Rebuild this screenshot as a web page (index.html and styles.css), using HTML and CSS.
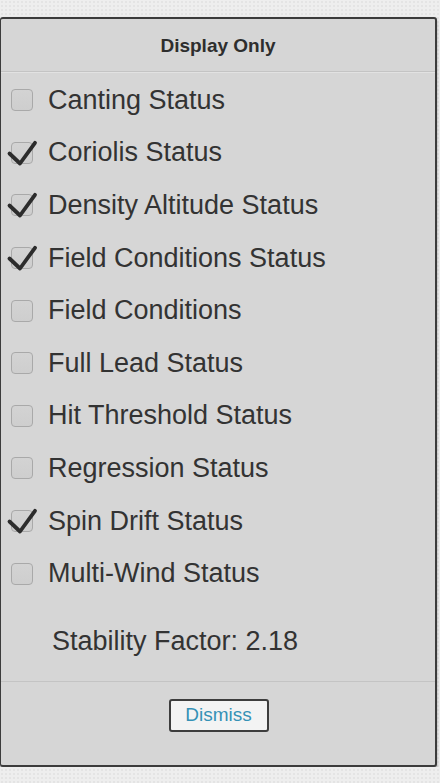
FILE: index.html
```html
<!DOCTYPE html>
<html lang="en">
<head>
    <meta charset="UTF-8">
    <meta name="viewport" content="width=device-width, initial-scale=1.0">
    <title>Display Only</title>
    <link rel="stylesheet" href="styles.css">
</head>
<body>

    <div class="panel">
        <div class="panel-header">Display Only</div>

        <div class="status-list">
            <label class="row"><span class="box"></span>Canting Status</label>
            <label class="row"><span class="box checked"><svg viewBox="0 0 30 26"><path d="M1.5 12.5 L12 22.5 L27 1.8"/></svg></span>Coriolis Status</label>
            <label class="row"><span class="box checked"><svg viewBox="0 0 30 26"><path d="M1.5 12.5 L12 22.5 L27 1.8"/></svg></span>Density Altitude Status</label>
            <label class="row"><span class="box checked"><svg viewBox="0 0 30 26"><path d="M1.5 12.5 L12 22.5 L27 1.8"/></svg></span>Field Conditions Status</label>
            <label class="row"><span class="box"></span>Field Conditions</label>
            <label class="row"><span class="box"></span>Full Lead Status</label>
            <label class="row"><span class="box"></span>Hit Threshold Status</label>
            <label class="row"><span class="box"></span>Regression Status</label>
            <label class="row"><span class="box checked"><svg viewBox="0 0 30 26"><path d="M1.5 12.5 L12 22.5 L27 1.8"/></svg></span>Spin Drift Status</label>
            <label class="row"><span class="box"></span>Multi-Wind Status</label>
        </div>

        <div class="stability">Stability Factor: 2.18</div>

        <div class="panel-footer">
            <button class="dismiss">Dismiss</button>
        </div>
    </div>

</body>
</html>
```

FILE: styles.css
```css
body {
    margin: 0;
    font-family: "Liberation Sans", Arial, sans-serif;
    background-color: #eeeeee;
    background-image: radial-gradient(#e4e4e4 1px, transparent 1px);
    background-size: 4px 4px;
    color: #333;
}
.panel {
    margin-top: 17px;
    width: 434px;
    height: 746px;
    background: #d6d6d6;
    border: 2px solid #3c3c3c;
    border-left-width: 1px;
    border-radius: 3px;
    box-shadow: 0 2px 3px rgba(0, 0, 0, 0.35);
    display: flex;
    flex-direction: column;
}
.panel-header {
    height: 52px;
    line-height: 54px;
    text-align: center;
    font-weight: bold;
    font-size: 19px;
    color: #2e2e2e;
    border-bottom: 1px solid #c4c4c4;
    box-shadow: 0 1px 0 #e2e2e2;
}
.status-list {
    padding-top: 2px;
}
.row {
    height: 52.6px;
    display: flex;
    align-items: center;
    padding-left: 10px;
    font-size: 27px;
    color: #333;
}
.box {
    position: relative;
    width: 20px;
    height: 20px;
    margin-right: 15px;
    border: 1px solid #a9a9a9;
    border-radius: 4px;
    background: linear-gradient(#d3d3d3, #cecece);
    flex-shrink: 0;
}
.box svg {
    position: absolute;
    left: -4px;
    top: -2px;
    width: 30px;
    height: 26px;
    overflow: visible;
}
.box svg path {
    fill: none;
    stroke: #2c2c2c;
    stroke-width: 3.8;
    stroke-linecap: round;
    stroke-linejoin: round;
}
.stability {
    height: 81px;
    line-height: 83px;
    padding-left: 51px;
    font-size: 27px;
    color: #333;
    border-bottom: 1px solid #c4c4c4;
}
.panel-footer {
    flex: 1;
    display: flex;
    justify-content: center;
    padding-top: 17px;
}
.dismiss {
    width: 100px;
    height: 33px;
    margin-left: 1px;
    background: #f3f3f3;
    border: 2px solid #3d3d3d;
    border-radius: 3px;
    font-family: "Liberation Sans", Arial, sans-serif;
    font-size: 19px;
    color: #3591b6;
    padding: 0;
}
```
